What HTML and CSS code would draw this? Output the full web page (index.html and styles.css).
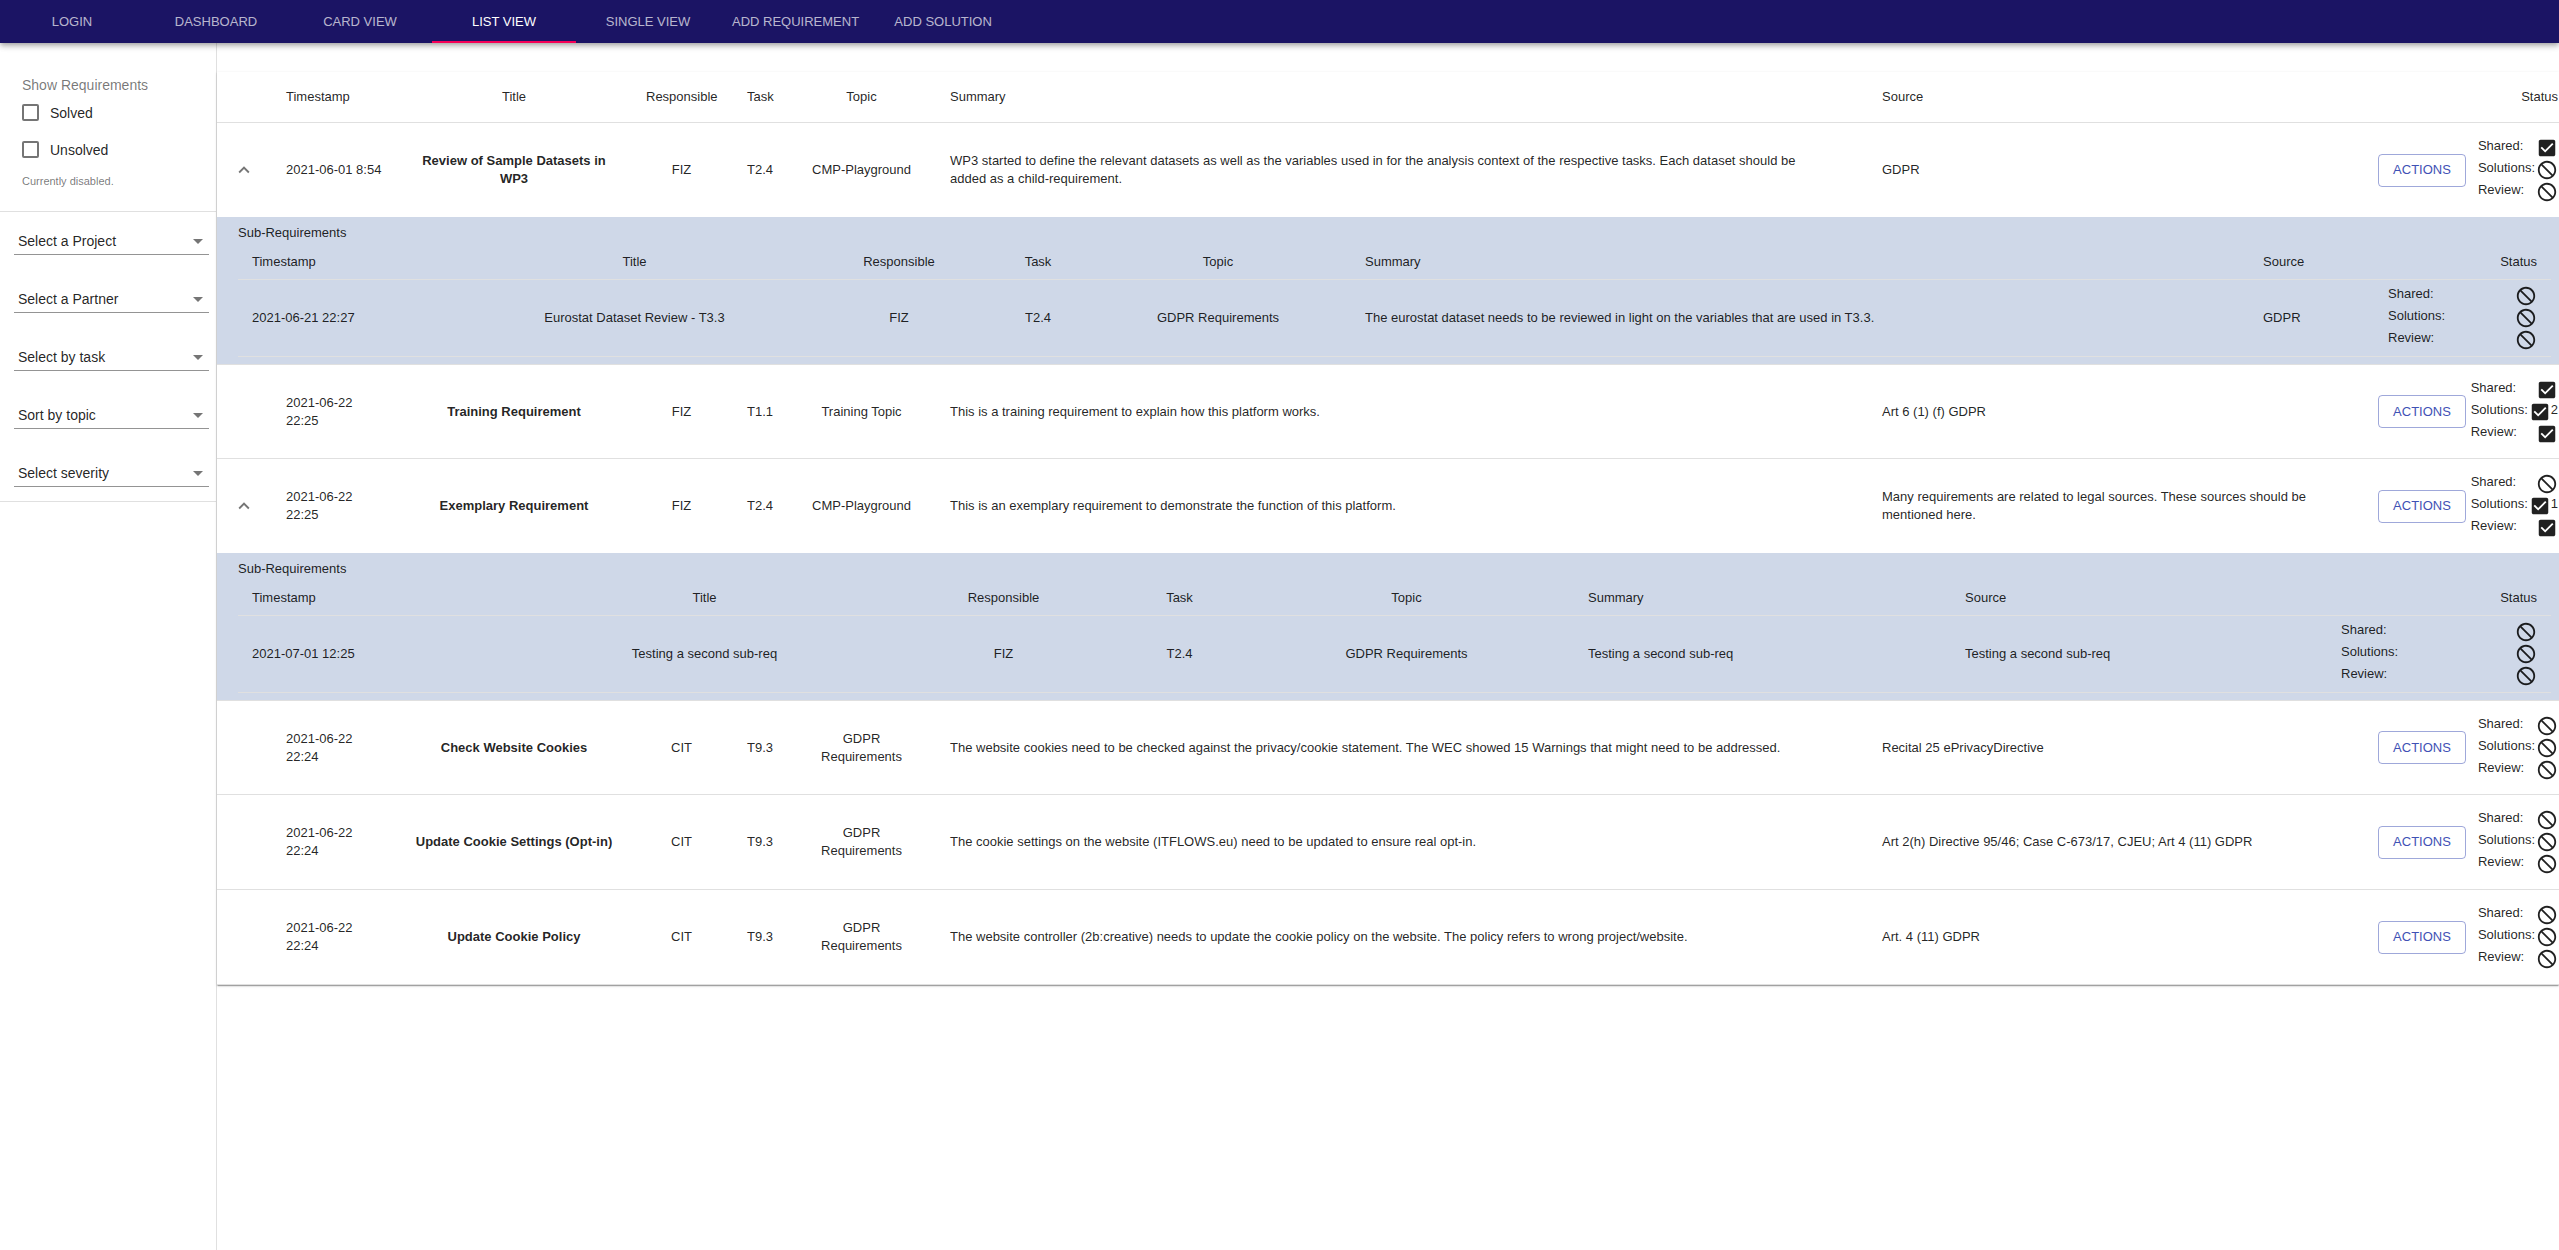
FILE: index.html
```html
<!DOCTYPE html>
<html lang="en">
<head>
<meta charset="utf-8">
<meta name="viewport" content="width=device-width, initial-scale=1">
<title>Requirements - List View</title>
<link rel="stylesheet" href="styles.css">
</head>
<body>
<svg class="sprite" aria-hidden="true">
  <symbol id="check" viewBox="0 0 24 24"><path d="M19 3H5c-1.11 0-2 .9-2 2v14c0 1.1.89 2 2 2h14c1.11 0 2-.9 2-2V5c0-1.1-.89-2-2-2zm-9 14l-5-5 1.41-1.41L10 14.17l7.59-7.59L19 8l-9 9z"/></symbol>
  <symbol id="block" viewBox="0 0 24 24"><path d="M12 2C6.48 2 2 6.48 2 12s4.48 10 10 10 10-4.48 10-10S17.52 2 12 2zM12 4c4.42 0 8 3.58 8 8 0 1.85-.63 3.55-1.69 4.9L7.1 5.69C8.45 4.63 10.15 4 12 4zM12 20c-4.42 0-8-3.58-8-8 0-1.85.63-3.55 1.69-4.9L16.9 18.31C15.55 19.37 13.85 20 12 20z"/></symbol>
  <symbol id="up" viewBox="0 0 24 24"><path d="M7.41 15.41L12 10.83l4.59 4.58L18 14l-6-6-6 6z"/></symbol>
</svg>

<header class="topbar">
  <nav class="tabs" aria-label="Main">
    <a class="tab" href="#login">LOGIN</a>
    <a class="tab" href="#dashboard">DASHBOARD</a>
    <a class="tab" href="#cards">CARD VIEW</a>
    <a class="tab tab-active" href="#list" aria-current="page">LIST VIEW</a>
    <a class="tab" href="#single">SINGLE VIEW</a>
    <a class="tab" href="#add-requirement">ADD REQUIREMENT</a>
    <a class="tab" href="#add-solution">ADD SOLUTION</a>
  </nav>
</header>

<div class="page">
  <aside class="sidebar">
    <fieldset class="show">
      <legend class="show-title">Show Requirements</legend>
      <label class="check-row"><input class="check" type="checkbox">Solved</label>
      <label class="check-row"><input class="check" type="checkbox">Unsolved</label>
      <p class="hint">Currently disabled.</p>
    </fieldset>
    <div class="filters">
      <div class="filter"><select class="select" aria-label="Project"><option>Select a Project</option></select></div>
      <div class="filter"><select class="select" aria-label="Partner"><option>Select a Partner</option></select></div>
      <div class="filter"><select class="select" aria-label="Task"><option>Select by task</option></select></div>
      <div class="filter"><select class="select" aria-label="Topic"><option>Sort by topic</option></select></div>
      <div class="filter"><select class="select" aria-label="Severity"><option>Select severity</option></select></div>
    </div>
  </aside>

  <main class="content">
    <div class="paper">
      <table class="list">
        <colgroup>
          <col class="c-expand"><col class="c-time"><col class="c-title"><col class="c-resp"><col class="c-task"><col class="c-topic"><col><col class="c-source"><col class="c-actions"><col class="c-status">
        </colgroup>
        <thead>
          <tr class="head">
            <td></td><th scope="col">Timestamp</th><th class="mid" scope="col">Title</th><th class="mid" scope="col">Responsible</th><th class="mid" scope="col">Task</th><th class="mid" scope="col">Topic</th><th scope="col">Summary</th><th scope="col">Source</th><td></td><th class="status-cell" scope="col">Status</th>
          </tr>
        </thead>
        <tbody>
          <tr class="row row-open">
            <td class="expand"><button class="toggle" type="button" aria-label="Collapse"><svg class="icon"><use href="#up"/></svg></button></td>
            <td>2021-06-01 8:54</td>
            <td class="mid name">Review of Sample Datasets in WP3</td>
            <td class="mid">FIZ</td><td class="mid">T2.4</td><td class="mid">CMP-Playground</td>
            <td class="summary">WP3 started to define the relevant datasets as well as the variables used in for the analysis context of the respective tasks. Each dataset should be added as a child-requirement.</td>
            <td>GDPR</td>
            <td class="actions"><button class="button" type="button">ACTIONS</button></td>
            <td class="status-cell">
              <div class="status">
                <div class="line"><span>Shared:</span><svg class="icon"><use href="#check"/></svg></div>
                <div class="line"><span>Solutions:</span><svg class="icon"><use href="#block"/></svg></div>
                <div class="line"><span>Review:</span><svg class="icon"><use href="#block"/></svg></div>
              </div>
            </td>
          </tr>
          <tr class="sub-row">
            <td class="sub-cell" colspan="10">
              <h2 class="sub-title">Sub-Requirements</h2>
              <table class="sub sub-first">
                <colgroup><col class="s-time"><col class="s-title"><col class="s-resp"><col class="s-task"><col class="s-topic"><col class="s-summary"><col class="s-source"><col class="s-status"></colgroup>
                <thead>
                  <tr class="sub-head"><th scope="col">Timestamp</th><th class="mid" scope="col">Title</th><th class="mid" scope="col">Responsible</th><th class="mid" scope="col">Task</th><th class="mid" scope="col">Topic</th><th scope="col">Summary</th><th scope="col">Source</th><th class="end" scope="col">Status</th></tr>
                </thead>
                <tbody>
                  <tr class="sub-item">
                    <td>2021-06-21 22:27</td><td class="mid">Eurostat Dataset Review - T3.3</td><td class="mid">FIZ</td><td class="mid">T2.4</td><td class="mid">GDPR Requirements</td><td>The eurostat dataset needs to be reviewed in light on the variables that are used in T3.3.</td><td>GDPR</td>
                    <td>
                      <div class="line"><span>Shared:</span><svg class="icon"><use href="#block"/></svg></div>
                      <div class="line"><span>Solutions:</span><svg class="icon"><use href="#block"/></svg></div>
                      <div class="line"><span>Review:</span><svg class="icon"><use href="#block"/></svg></div>
                    </td>
                  </tr>
                </tbody>
              </table>
            </td>
          </tr>
          <tr class="row">
            <td></td>
            <td>2021-06-22 22:25</td>
            <td class="mid name">Training Requirement</td>
            <td class="mid">FIZ</td><td class="mid">T1.1</td><td class="mid">Training Topic</td>
            <td class="summary">This is a training requirement to explain how this platform works.</td>
            <td>Art 6 (1) (f) GDPR</td>
            <td class="actions"><button class="button" type="button">ACTIONS</button></td>
            <td class="status-cell">
              <div class="status">
                <div class="line"><span>Shared:</span><svg class="icon"><use href="#check"/></svg></div>
                <div class="line"><span>Solutions:</span><span class="count"><svg class="icon"><use href="#check"/></svg>2</span></div>
                <div class="line"><span>Review:</span><svg class="icon"><use href="#check"/></svg></div>
              </div>
            </td>
          </tr>
          <tr class="row row-open">
            <td class="expand"><button class="toggle" type="button" aria-label="Collapse"><svg class="icon"><use href="#up"/></svg></button></td>
            <td>2021-06-22 22:25</td>
            <td class="mid name">Exemplary Requirement</td>
            <td class="mid">FIZ</td><td class="mid">T2.4</td><td class="mid">CMP-Playground</td>
            <td class="summary">This is an exemplary requirement to demonstrate the function of this platform.</td>
            <td>Many requirements are related to legal sources. These sources should be mentioned here.</td>
            <td class="actions"><button class="button" type="button">ACTIONS</button></td>
            <td class="status-cell">
              <div class="status">
                <div class="line"><span>Shared:</span><svg class="icon"><use href="#block"/></svg></div>
                <div class="line"><span>Solutions:</span><span class="count"><svg class="icon"><use href="#check"/></svg>1</span></div>
                <div class="line"><span>Review:</span><svg class="icon"><use href="#check"/></svg></div>
              </div>
            </td>
          </tr>
          <tr class="sub-row">
            <td class="sub-cell" colspan="10">
              <h2 class="sub-title">Sub-Requirements</h2>
              <table class="sub sub-second">
                <colgroup><col class="s-time"><col class="s-title"><col class="s-resp"><col class="s-task"><col class="s-topic"><col class="s-summary"><col class="s-source"><col class="s-status"></colgroup>
                <thead>
                  <tr class="sub-head"><th scope="col">Timestamp</th><th class="mid" scope="col">Title</th><th class="mid" scope="col">Responsible</th><th class="mid" scope="col">Task</th><th class="mid" scope="col">Topic</th><th scope="col">Summary</th><th scope="col">Source</th><th class="end" scope="col">Status</th></tr>
                </thead>
                <tbody>
                  <tr class="sub-item">
                    <td>2021-07-01 12:25</td><td class="mid">Testing a second sub-req</td><td class="mid">FIZ</td><td class="mid">T2.4</td><td class="mid">GDPR Requirements</td><td>Testing a second sub-req</td><td>Testing a second sub-req</td>
                    <td>
                      <div class="line"><span>Shared:</span><svg class="icon"><use href="#block"/></svg></div>
                      <div class="line"><span>Solutions:</span><svg class="icon"><use href="#block"/></svg></div>
                      <div class="line"><span>Review:</span><svg class="icon"><use href="#block"/></svg></div>
                    </td>
                  </tr>
                </tbody>
              </table>
            </td>
          </tr>
          <tr class="row">
            <td></td>
            <td>2021-06-22 22:24</td>
            <td class="mid name">Check Website Cookies</td>
            <td class="mid">CIT</td><td class="mid">T9.3</td><td class="mid">GDPR Requirements</td>
            <td class="summary">The website cookies need to be checked against the privacy/cookie statement. The WEC showed 15 Warnings that might need to be addressed.</td>
            <td>Recital 25 ePrivacyDirective</td>
            <td class="actions"><button class="button" type="button">ACTIONS</button></td>
            <td class="status-cell">
              <div class="status">
                <div class="line"><span>Shared:</span><svg class="icon"><use href="#block"/></svg></div>
                <div class="line"><span>Solutions:</span><svg class="icon"><use href="#block"/></svg></div>
                <div class="line"><span>Review:</span><svg class="icon"><use href="#block"/></svg></div>
              </div>
            </td>
          </tr>
          <tr class="row">
            <td></td>
            <td>2021-06-22 22:24</td>
            <td class="mid name">Update Cookie Settings (Opt-in)</td>
            <td class="mid">CIT</td><td class="mid">T9.3</td><td class="mid">GDPR Requirements</td>
            <td class="summary">The cookie settings on the website (ITFLOWS.eu) need to be updated to ensure real opt-in.</td>
            <td>Art 2(h) Directive 95/46; Case C-673/17, CJEU; Art 4 (11) GDPR</td>
            <td class="actions"><button class="button" type="button">ACTIONS</button></td>
            <td class="status-cell">
              <div class="status">
                <div class="line"><span>Shared:</span><svg class="icon"><use href="#block"/></svg></div>
                <div class="line"><span>Solutions:</span><svg class="icon"><use href="#block"/></svg></div>
                <div class="line"><span>Review:</span><svg class="icon"><use href="#block"/></svg></div>
              </div>
            </td>
          </tr>
          <tr class="row">
            <td></td>
            <td>2021-06-22 22:24</td>
            <td class="mid name">Update Cookie Policy</td>
            <td class="mid">CIT</td><td class="mid">T9.3</td><td class="mid">GDPR Requirements</td>
            <td class="summary">The website controller (2b:creative) needs to update the cookie policy on the website. The policy refers to wrong project/website.</td>
            <td>Art. 4 (11) GDPR</td>
            <td class="actions"><button class="button" type="button">ACTIONS</button></td>
            <td class="status-cell">
              <div class="status">
                <div class="line"><span>Shared:</span><svg class="icon"><use href="#block"/></svg></div>
                <div class="line"><span>Solutions:</span><svg class="icon"><use href="#block"/></svg></div>
                <div class="line"><span>Review:</span><svg class="icon"><use href="#block"/></svg></div>
              </div>
            </td>
          </tr>
        </tbody>
      </table>
    </div>
  </main>
</div>
</body>
</html>
```
FILE: styles.css
```css
*, *::before, *::after { box-sizing: border-box; }

body {
  margin: 0;
  min-height: 100vh;
  display: flex;
  flex-direction: column;
  background: #fff;
  color: rgba(0, 0, 0, .87);
  font: 13px/18px "Liberation Sans", Arial, sans-serif;
}

button, select, input { font: inherit; color: inherit; }

.sprite { position: absolute; width: 0; height: 0; }

.icon {
  display: block;
  width: 22px;
  height: 22px;
  flex: none;
  fill: currentColor;
}

/* Top bar */
.topbar {
  position: relative;
  z-index: 1;
  background: #1b1464;
  box-shadow: 0 2px 4px -1px rgba(0, 0, 0, .2), 0 4px 5px rgba(0, 0, 0, .14), 0 1px 9px rgba(0, 0, 0, .12);
}

.tabs { display: flex; }

.tab {
  min-width: 144px;
  height: 43px;
  padding: 2px 12px 0;
  display: flex;
  align-items: center;
  justify-content: center;
  border-bottom: 2px solid transparent;
  color: rgba(255, 255, 255, .7);
  text-decoration: none;
}

.tab-active { color: #fff; border-bottom-color: #f50057; }

/* Page */
.page { flex: 1; display: flex; }

.sidebar {
  width: 217px;
  flex: none;
  border-right: 1px solid #e0e0e0;
}

.show {
  margin: 0;
  padding: 34px 22px 21px;
  border: 0;
  border-bottom: 1px solid #e0e0e0;
  font-size: 14px;
}

.show-title {
  float: left;
  width: 100%;
  padding: 0;
  line-height: 17px;
  color: rgba(0, 0, 0, .54);
}

.check-row {
  clear: both;
  height: 37px;
  display: flex;
  align-items: center;
  gap: 11px;
}

.check {
  appearance: none;
  width: 17px;
  height: 17px;
  margin: 0;
  border: 2px solid #757575;
  border-radius: 2px;
}

.hint {
  margin: 4px 0 0;
  color: rgba(0, 0, 0, .54);
  font-size: 11px;
}

.filters {
  display: grid;
  gap: 29px;
  padding: 14px 7px 14px 14px;
  border-bottom: 1px solid #e0e0e0;
}

.filter { position: relative; }

.filter::after {
  content: "";
  position: absolute;
  right: 6px;
  top: 13px;
  border: 5px solid transparent;
  border-top-color: #757575;
  border-bottom-width: 0;
  pointer-events: none;
}

.select {
  appearance: none;
  display: block;
  width: 100%;
  height: 29px;
  padding: 2px 22px 0 4px;
  border: 0;
  border-bottom: 1px solid #949494;
  border-radius: 0;
  background: none;
  font-size: 14px;
}

/* Requirement list */
.content {
  flex: 1;
  min-width: 0;
  padding-top: 29px;
}

.paper {
  box-shadow: 0 2px 1px -1px rgba(0, 0, 0, .2), 0 1px 1px rgba(0, 0, 0, .14), 0 1px 3px rgba(0, 0, 0, .12);
}

table {
  width: 100%;
  table-layout: fixed;
  border-collapse: separate;
  border-spacing: 0;
}

th, td {
  padding: 0 14px;
  border-bottom: 1px solid #e0e0e0;
  font-weight: 400;
  text-align: left;
  vertical-align: middle;
}

.c-expand { width: 54px; }
.c-time { width: 126px; }
.c-title { width: 234px; }
.c-resp { width: 101px; }
.c-task { width: 56px; }
.c-topic { width: 147px; }
.c-source { width: 496px; }
.c-actions { width: 104px; }
.c-status { width: 92px; }

.list .mid { text-align: center; }
.list .end { text-align: right; }
.list .name { font-weight: 700; }

.head { height: 51px; }
.row { height: 94px; }
.row:nth-last-child(-n+2) { height: 95px; }
.head > *, .row > td { padding: 0 15px; }
.row > .summary { padding-right: 36px; }
.row-open > td { border-bottom: 0; }

.row > .expand { padding: 0 16px; }

.toggle {
  display: block;
  padding: 0;
  border: 0;
  background: none;
  color: rgba(0, 0, 0, .54);
}

.row > .actions { padding: 0; }

.button {
  display: block;
  width: 88px;
  height: 33px;
  margin-left: auto;
  margin-right: 1px;
  padding: 0;
  border: 1px solid rgba(63, 81, 181, .5);
  border-radius: 4px;
  background: none;
  color: #3f51b5;
}

.list .head > .status-cell, .row > .status-cell {
  padding: 0 1px 0 0;
  text-align: right;
}

.status {
  width: fit-content;
  margin-left: auto;
}

.line {
  display: flex;
  justify-content: space-between;
  gap: 1px;
  height: 22px;
}

.count { display: flex; }

/* Nested requirements */
.list .sub-cell {
  padding: 7px 8px 7px 21px;
  background: #cfd8e8;
}

.sub-title {
  margin: 0 0 5px;
  font-size: 13px;
  font-weight: 400;
}

.sub-head { height: 33px; }
.sub-item { height: 77px; }
.sub-head th { padding: 0 14px 2px; }

.sub-first .s-time { width: 224px; }
.sub-first .s-title { width: 345px; }
.sub-first .s-resp { width: 184px; }
.sub-first .s-task { width: 94px; }
.sub-first .s-topic { width: 266px; }
.sub-first .s-summary { width: 898px; }
.sub-first .s-source { width: 125px; }
.sub-first .s-status { width: 177px; }

.sub-second .s-time { width: 284px; }
.sub-second .s-title { width: 365px; }
.sub-second .s-resp { width: 233px; }
.sub-second .s-task { width: 119px; }
.sub-second .s-topic { width: 335px; }
.sub-second .s-summary { width: 377px; }
.sub-second .s-source { width: 376px; }
.sub-second .s-status { width: 224px; }
```
